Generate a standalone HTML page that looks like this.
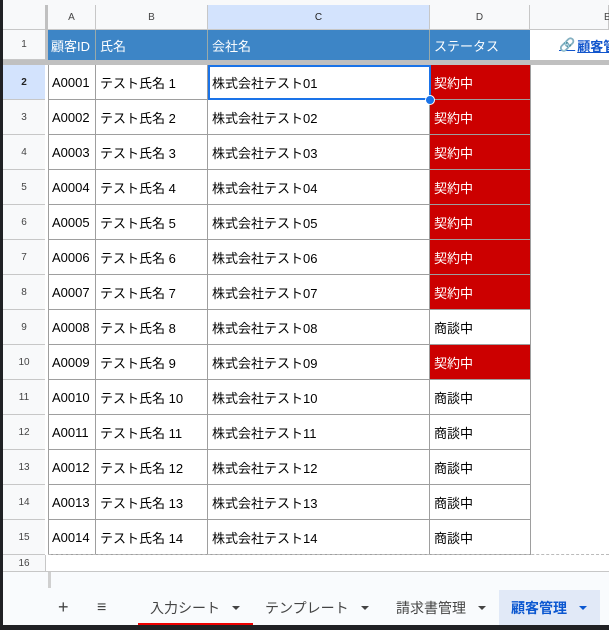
<!DOCTYPE html>
<html><head><meta charset="utf-8"><style>
*{margin:0;padding:0;box-sizing:border-box}
body{width:609px;height:630px;overflow:hidden;background:#fff;position:relative;font-family:"Liberation Sans","Noto Sans CJK JP",sans-serif;}
.a{position:absolute}
.c{position:absolute;font-size:13px;color:#000;padding-left:4px;display:flex;align-items:center;white-space:nowrap;overflow:hidden}
.rh{position:absolute;left:3px;width:42px;font-size:10px;color:#444;display:flex;align-items:center;justify-content:center;background:#f8f9fa;border-bottom:1px solid #c7c7c7}
.ch{position:absolute;top:5px;height:25px;font-size:10px;color:#444;display:flex;align-items:center;justify-content:center;background:#f8f9fa;border-right:1px solid #c7c7c7;border-bottom:1px solid #c7c7c7}
.red{background:#cc0000;color:#fff}
.tab{position:absolute;top:590px;height:35px;font-size:14px;color:#444;display:flex;align-items:center}
.tri{display:inline-block;width:0;height:0;border-left:4px solid transparent;border-right:4px solid transparent;border-top:4px solid #444;margin-left:12px}
</style></head><body>
<div class="a" style="left:0;top:0;width:3px;height:630px;background:#202124"></div>
<div class="a" style="left:3px;top:0;width:606px;height:5px;background:#f8f9fa"></div>
<div class="a" style="left:3px;top:5px;width:42px;height:25px;background:#f8f9fa;border-bottom:1px solid #c7c7c7"></div>
<div class="a" style="left:45px;top:5px;width:3px;height:55px;background:#c0c0c0"></div>
<div class="ch" style="left:48px;width:48px">A</div>
<div class="ch" style="left:96px;width:112px">B</div>
<div class="ch" style="left:208px;width:222px;background:#d3e3fd;color:#222">C</div>
<div class="ch" style="left:430px;width:100px">D</div>
<div class="ch" style="left:530px;width:79px;justify-content:flex-start;padding-left:74px">E</div>
<div class="rh" style="top:30px;height:30px">1</div>
<div class="c" style="left:48px;top:30px;width:48px;height:30px;background:#3d85c6;color:#fff;border-right:1px solid #9aa;padding-left:3px">顧客ID</div>
<div class="c" style="left:96px;top:30px;width:112px;height:30px;background:#3d85c6;color:#fff;border-right:1px solid #9aa">氏名</div>
<div class="c" style="left:208px;top:30px;width:222px;height:30px;background:#3d85c6;color:#fff;border-right:1px solid #9aa">会社名</div>
<div class="c" style="left:430px;top:30px;width:100px;height:30px;background:#3d85c6;color:#fff">ステータス</div>
<div class="c" style="left:555px;top:30px;width:60px;height:30px;color:#1155cc;font-weight:bold;text-decoration:underline"><span style="color:#999;font-weight:normal;text-decoration:none;margin-right:2px">🔗</span>顧客管</div>
<div class="a" style="left:3px;top:60px;width:606px;height:5px;background:#c0c0c0"></div>
<div id="g"></div>
<div class="a" style="left:48px;top:554px;width:561px;height:1px;border-top:1px dashed #bbb"></div>
<div class="rh" style="top:555px;height:17px">16</div>
<div class="a" style="left:45px;top:555px;width:564px;height:17px;border-bottom:1px solid #c7c7c7;border-left:1px solid #c7c7c7"></div>
<div class="a" style="left:3px;top:572px;width:606px;height:53px;background:#f9fbfd"></div>
<div class="a" style="left:48px;top:572px;width:3px;height:16px;background:#d0d0d0"></div>
<div class="tab" style="left:58px;font-size:18px">+</div>
<div class="tab" style="left:97px;font-size:16px">≡</div>
<div class="tab" style="left:150px">入力シート<span class="tri"></span></div>
<div class="a" style="left:138px;top:623px;width:115px;height:3px;background:#e00"></div>
<div class="tab" style="left:265px">テンプレート<span class="tri"></span></div>
<div class="tab" style="left:396px">請求書管理<span class="tri"></span></div>
<div class="tab" style="left:499px;width:101px;background:#e1e9f7;color:#0b57d0;font-weight:bold;padding-left:12px">顧客管理<span class="tri" style="border-top-color:#0b57d0"></span></div>
<div class="a" style="left:0;top:625px;width:609px;height:5px;background:#202124"></div>
<script>
var h='';var st=['契約中','契約中','契約中','契約中','契約中','契約中','契約中','商談中','契約中','商談中','商談中','商談中','商談中','商談中'];
for(var i=0;i<14;i++){var t=65+i*35,n=i+1,id='A'+String(n).padStart(4,'0');
h+='<div class="rh" style="top:'+t+'px;height:35px;'+(i==0?'background:#d3e3fd;color:#222;font-weight:bold':'')+'">'+(i+2)+'</div>';
var b='border-right:1px solid #9e9e9e;border-bottom:1px solid #9e9e9e;';
h+='<div class="c" style="left:48px;top:'+t+'px;width:48px;height:35px;border-left:1px solid #9e9e9e;'+b+'padding-left:3px">'+id+'</div>';
h+='<div class="c" style="left:96px;top:'+t+'px;width:112px;height:35px;'+b+'">テスト氏名 '+n+'</div>';
h+='<div class="c" style="left:208px;top:'+t+'px;width:222px;height:35px;'+b+'">株式会社テスト'+String(n).padStart(2,'0')+'</div>';
h+='<div class="c '+(st[i]=='契約中'?'red':'')+'" style="left:430px;top:'+t+'px;width:101px;height:35px;'+b+'">'+st[i]+'</div>';}
h+='<div class="a" style="left:208px;top:65px;width:223px;height:35px;border:2px solid #1a73e8"></div><div class="a" style="left:425px;top:95px;width:10px;height:10px;border-radius:50%;background:#1a73e8;border:1px solid #fff"></div>';
document.getElementById('g').innerHTML=h;
</script>
</body></html>
